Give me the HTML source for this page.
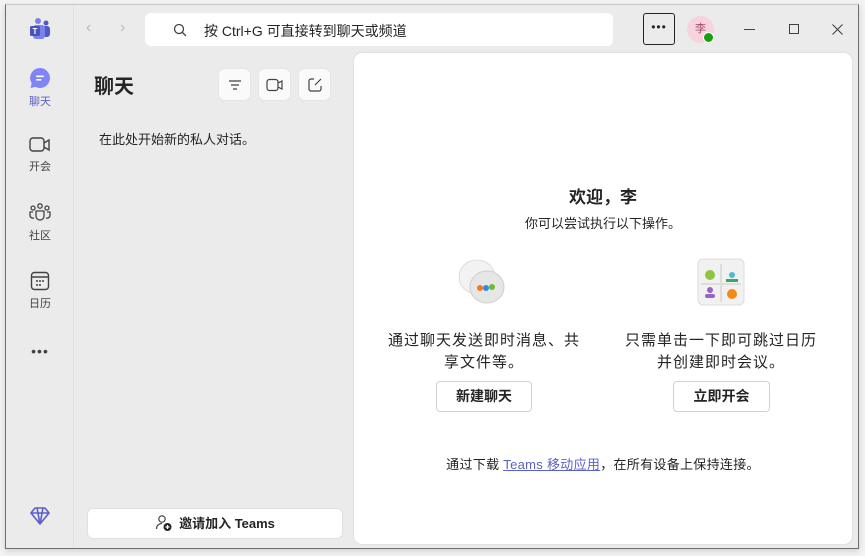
<!DOCTYPE html>
<html><head><meta charset="utf-8"><style>
*{margin:0;padding:0;box-sizing:border-box}
body{width:865px;height:556px;background:#f3f3f3;font-family:"Liberation Sans","Noto Sans CJK SC",sans-serif;color:#242424;position:relative;overflow:hidden}
.win{position:absolute;left:5px;top:4px;width:854px;height:545px;background:#ebebeb;border:1px solid #6e6e6e;border-top-color:#c8c8c8;box-shadow:0 2px 6px rgba(0,0,0,.15)}
.rail{position:absolute;left:0;top:0;width:68px;height:100%;border-right:1px solid #e0e0e0}
.ri{position:absolute;left:0;width:68px;text-align:center;font-size:11px;color:#424242}
.ri svg{display:block;margin:0 auto 4px}
.abs{position:absolute}
.search{position:absolute;left:139px;top:8px;width:468px;height:33px;background:#fff;border-radius:6px;font-size:14px}
.btn{position:absolute;width:33px;height:33px;background:#fafafa;border-radius:7px;border:1px solid #e6e6e6}
.main{position:absolute;left:348px;top:48px;width:498px;height:491px;background:#fff;border-radius:8px;box-shadow:0 0 2px rgba(0,0,0,.12)}
.pb{position:absolute;height:31px;border:1px solid #d1d1d1;border-radius:4px;background:#fff;font-size:14px;font-weight:bold;text-align:center;line-height:29px}
</style></head><body>
<div class="win">
 <div class="rail">
  <svg class="abs" style="left:22px;top:12px" width="24" height="24" viewBox="0 0 24 24"><circle cx="10" cy="4" r="3" fill="#7b83eb"/><circle cx="18" cy="6" r="2.5" fill="#5059c9"/><rect x="14" y="9" width="8" height="11" rx="3" fill="#5059c9"/><rect x="5" y="8" width="12" height="14" rx="3" fill="#7b83eb"/><rect x="2" y="9" width="10" height="10" rx="1.5" fill="#4b53bc"/><text x="7" y="17" font-size="8" fill="#fff" text-anchor="middle" font-weight="bold" font-family="Liberation Sans">T</text></svg>
  <div class="ri" style="top:62px;color:#5b5fc7"><svg width="22" height="22" viewBox="0 0 22 22"><path d="M11 1a10 10 0 1 1-4.6 18.9L1.5 21l1.2-4.6A10 10 0 0 1 11 1z" fill="#7f85f5"/><rect x="7" y="8.5" width="8" height="1.6" rx=".8" fill="#fff"/><rect x="7" y="12" width="5.5" height="1.6" rx=".8" fill="#fff"/></svg>聊天</div>
  <div class="ri" style="top:131px"><svg width="22" height="18" viewBox="0 0 22 18"><rect x="1" y="2" width="14" height="13" rx="3" fill="none" stroke="#424242" stroke-width="1.4"/><path d="M15 7l5-3v10l-5-3" fill="none" stroke="#424242" stroke-width="1.4"/></svg>开会</div>
  <div class="ri" style="top:198px"><svg width="22" height="20" viewBox="0 0 22 20"><circle cx="11" cy="3" r="2.2" fill="none" stroke="#424242" stroke-width="1.3"/><circle cx="4" cy="5" r="2" fill="none" stroke="#424242" stroke-width="1.3"/><circle cx="18" cy="5" r="2" fill="none" stroke="#424242" stroke-width="1.3"/><path d="M7 8h8v5a4 4 0 0 1-8 0z M4 9H1v3a3 3 0 0 0 4 3 M18 9h3v3a3 3 0 0 1-4 3" fill="none" stroke="#424242" stroke-width="1.3"/></svg>社区</div>
  <div class="ri" style="top:266px"><svg width="20" height="20" viewBox="0 0 20 20"><rect x="1.5" y="1.5" width="17" height="17" rx="3" fill="none" stroke="#424242" stroke-width="1.4"/><path d="M1.5 6h17" stroke="#424242" stroke-width="1.4"/><g fill="#424242"><circle cx="7" cy="10" r="1"/><circle cx="10" cy="10" r="1"/><circle cx="13" cy="10" r="1"/><circle cx="7" cy="14" r="1"/><circle cx="10" cy="14" r="1"/></g></svg>日历</div>
  <div class="ri" style="top:338px;font-size:14px;letter-spacing:1px">•••</div>
  <svg class="abs" style="left:24px;top:502px" width="20" height="18" viewBox="0 0 20 18"><path d="M5 1h10l4 5-9 11L1 6z M1 6h18 M7 1l3 16 3-16" fill="none" stroke="#5b5fc7" stroke-width="1.6" stroke-linejoin="round"/></svg>
 </div>
 <div class="abs" style="left:80px;top:14px;color:#bbb;font-size:16px">‹</div>
 <div class="abs" style="left:114px;top:14px;color:#bbb;font-size:16px">›</div>
 <div class="search"><svg class="abs" style="left:28px;top:10px" width="14" height="14" viewBox="0 0 14 14"><circle cx="6" cy="6" r="4.5" fill="none" stroke="#424242" stroke-width="1.3"/><path d="M9.5 9.5l3.5 3.5" stroke="#424242" stroke-width="1.3"/></svg><span class="abs" style="left:59px;top:8px">按 Ctrl+G 可直接转到聊天或频道</span></div>
 <div class="abs" style="left:637px;top:8px;width:32px;height:32px;border:1px solid #242424;border-radius:3px;text-align:center;line-height:26px;font-size:12px;letter-spacing:1px">•••</div>
 <div class="abs" style="left:681px;top:11px;width:27px;height:27px;border-radius:50%;background:#f6d3dd;color:#a4476a;font-size:11px;text-align:center;line-height:27px">李</div>
 <div class="abs" style="left:697px;top:27px;width:11px;height:11px;border-radius:50%;background:#13a10e;border:1.5px solid #fff"></div>
 <div class="abs" style="left:738px;top:24px;width:11px;height:1px;background:#424242"></div>
 <div class="abs" style="left:783px;top:19px;width:10px;height:10px;border:1px solid #424242"></div>
 <svg class="abs" style="left:826px;top:19px" width="11" height="11" viewBox="0 0 11 11"><path d="M.5 .5l10 10M10.5 .5l-10 10" stroke="#424242" stroke-width="1.1"/></svg>
 <div class="abs" style="left:88px;top:65px;font-size:20px;font-weight:bold">聊天</div>
 <div class="btn" style="left:212px;top:63px"><svg style="margin:9px" width="14" height="14" viewBox="0 0 14 14"><path d="M1 3h12M3 7h8M5 11h4" stroke="#424242" stroke-width="1.2"/></svg></div>
 <div class="btn" style="left:252px;top:63px"><svg style="margin:9px 7px" width="18" height="14" viewBox="0 0 18 14"><rect x="1" y="1.5" width="11" height="11" rx="2.5" fill="none" stroke="#424242" stroke-width="1.2"/><path d="M12 5l4-2v8l-4-2" fill="none" stroke="#424242" stroke-width="1.2"/></svg></div>
 <div class="btn" style="left:292px;top:63px"><svg style="margin:8px" width="16" height="16" viewBox="0 0 16 16"><path d="M7 2H4a2 2 0 0 0-2 2v8a2 2 0 0 0 2 2h8a2 2 0 0 0 2-2V9M8 8l6-6" fill="none" stroke="#424242" stroke-width="1.2"/></svg></div>
 <div class="abs" style="left:93px;top:124px;font-size:13px">在此处开始新的私人对话。</div>
 <div class="abs" style="left:81px;top:503px;width:256px;height:31px;background:#fff;border:1px solid #e0e0e0;border-radius:6px;font-size:13px;font-weight:bold;text-align:center;line-height:29px"><svg style="vertical-align:-4px;margin-right:6px" width="18" height="18" viewBox="0 0 18 18"><circle cx="7" cy="5" r="3.2" fill="none" stroke="#424242" stroke-width="1.2"/><path d="M1.5 15c0-4 3-5.5 5.5-5.5" fill="none" stroke="#424242" stroke-width="1.2"/><circle cx="12.5" cy="13" r="4" fill="#242424"/><path d="M12.5 11v4M10.5 13h4" stroke="#fff" stroke-width="1.2"/></svg>邀请加入 Teams</div>
 <div class="main">
  <div class="abs" style="left:0;width:100%;top:130px;text-align:center;font-size:17px;font-weight:bold">欢迎，李</div>
  <div class="abs" style="left:0;width:100%;top:160px;text-align:center;font-size:13px">你可以尝试执行以下操作。</div>
  <svg class="abs" style="left:103px;top:204px" width="50" height="52" viewBox="0 0 50 52"><ellipse cx="20" cy="20" rx="18" ry="17" fill="#f2f2f2" stroke="#ddd"/><ellipse cx="30" cy="30" rx="17" ry="16" fill="#e6e6e6" stroke="#ccc"/><circle cx="23" cy="31" r="3" fill="#f27a1a"/><circle cx="29" cy="31" r="3" fill="#2d8be8"/><circle cx="35" cy="30" r="3" fill="#6cbd2a"/></svg>
  <svg class="abs" style="left:343px;top:205px" width="48" height="48" viewBox="0 0 48 48"><rect x="1" y="1" width="46" height="46" rx="5" fill="#f1f1f1" stroke="#ddd"/><path d="M24 6v38M4 26h40" stroke="#ddd" stroke-width="2"/><circle cx="13" cy="17" r="5" fill="#8cc63e"/><circle cx="35" cy="17" r="3" fill="#4fb7d8"/><rect x="29" y="21" width="12" height="3" fill="#3aa66a"/><circle cx="13" cy="32" r="3" fill="#9a63c8"/><rect x="8" y="36" width="10" height="4" rx="2" fill="#9a63c8"/><circle cx="35" cy="36" r="5" fill="#f28a1a"/></svg>
  <div class="abs" style="left:10px;width:240px;top:277px;text-align:center;font-size:15px;line-height:22px;letter-spacing:1px">通过聊天发送即时消息、共<br>享文件等。</div>
  <div class="abs" style="left:247px;width:240px;top:277px;text-align:center;font-size:15px;line-height:22px;letter-spacing:1px">只需单击一下即可跳过日历<br>并创建即时会议。</div>
  <div class="pb" style="left:82px;top:328px;width:96px">新建聊天</div>
  <div class="pb" style="left:319px;top:328px;width:97px">立即开会</div>
  <div class="abs" style="left:0;width:100%;top:401px;text-align:center;font-size:13px;letter-spacing:.3px">通过下载 <span style="color:#5b5fc7;text-decoration:underline">Teams 移动应用</span>，在所有设备上保持连接。</div>
 </div>
</div>
</body></html>
